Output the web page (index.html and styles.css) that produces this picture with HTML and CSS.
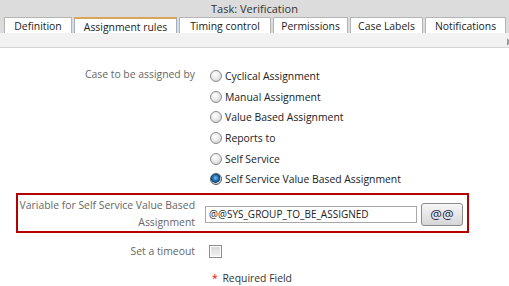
FILE: index.html
```html
<!DOCTYPE html>
<html>
  <head>
    <meta charset="UTF-8">
    <title>Task: Verification</title>
    <link rel="stylesheet" href="styles.css">
  </head>
  <body>
    <div class="titlebar">Task: Verification</div>
    <div class="tabs">
      <div class="tab">Definition</div>
      <div class="tab active">Assignment rules</div>
      <div class="tab">Timing control</div>
      <div class="tab">Permissions</div>
      <div class="tab">Case Labels</div>
      <div class="tab">Notifications</div>
    </div>
    <div class="strip"><span class="arrow"></span></div>

    <div class="form">
      <div class="row">
        <div class="label">Case to be assigned by</div>
        <div class="options">
          <label class="option"><input type="radio" name="assign"> Cyclical Assignment</label>
          <label class="option"><input type="radio" name="assign"> Manual Assignment</label>
          <label class="option"><input type="radio" name="assign"> Value Based Assignment</label>
          <label class="option"><input type="radio" name="assign"> Reports to</label>
          <label class="option"><input type="radio" name="assign"> Self Service</label>
          <label class="option"><input type="radio" name="assign" checked> Self Service Value Based Assignment</label>
        </div>
      </div>

      <div class="row highlight">
        <div class="label">Variable for Self Service Value Based Assignment</div>
        <div class="field">
          <input type="text" class="text" value="@@SYS_GROUP_TO_BE_ASSIGNED">
          <button class="vars">@@</button>
        </div>
      </div>

      <div class="row timeout">
        <div class="label">Set a timeout</div>
        <div><input type="checkbox" class="check"></div>
      </div>

      <div class="required"><span class="star">*</span> Required Field</div>
    </div>
  </body>
</html>
```

FILE: styles.css
```css
body {
  margin: 0;
  font-family: "Open Sans", Arial, sans-serif;
  font-size: 10.4px;
  color: #333;
  background: #fff;
}
.titlebar {
  background: #dcdcdc;
  height: 17px;
  line-height: 17px;
  text-align: center;
  font-size: 11px;
  color: #333;
}
.tabs {
  display: flex;
  gap: 2px;
  background: #dcdcdc;
  padding-left: 4px;
  height: 16px;
}
.tab {
  box-sizing: border-box;
  background: #fff;
  border: 1px solid #b4b4b4;
  border-bottom: none;
  line-height: 17px;
  text-align: center;
  white-space: nowrap;
  color: #222;
}
.tab:nth-child(1) { width: 68px; }
.tab:nth-child(2) { width: 103px; }
.tab:nth-child(3) { width: 92px; }
.tab:nth-child(4) { width: 75px; }
.tab:nth-child(5) { width: 73px; }
.tab:nth-child(6) { width: 81px; }
.tab.active {
  border-top: 2px solid #d9a55a;
  border-left-color: #9fb0c4;
  border-right-color: #9fb0c4;
  line-height: 16px;
}
.strip {
  display: flex;
  justify-content: flex-end;
  align-items: center;
  height: 14px;
  background: #f2f2f2;
  border-bottom: 1px solid #d4d4d4;
}
.arrow {
  width: 0;
  height: 0;
  border-top: 4px solid transparent;
  border-bottom: 4px solid transparent;
  border-left: 4px solid #999;
  margin-right: -2px;
  margin-top: 4px;
}
.form {
  padding-top: 18px;
}
.row {
  display: grid;
  grid-template-columns: 195px auto;
  column-gap: 10px;
}
.label {
  text-align: right;
  color: #666;
  line-height: 17px;
}
.options {
  display: flex;
  flex-direction: column;
}
.option {
  display: flex;
  align-items: center;
  height: 20.6px;
  color: #222;
}
.option input {
  appearance: none;
  width: 12px;
  height: 12px;
  margin: 0 3px 0 5px;
  border: 1px solid #8c8c8c;
  border-radius: 50%;
  background: radial-gradient(circle at 40% 35%, #fff 0%, #e6e6e6 55%, #bdbdbd 100%);
}
.option input:checked {
  background: radial-gradient(circle at 45% 40%, #7fc1f0 0%, #1c6fb5 35%, #0b3e6e 55%, #d8d8d8 62%, #a9a9a9 100%);
  border-color: #5a5a5a;
}
.highlight {
  border: 2px solid #b40000;
  margin: 3px 40px 0 16px;
  grid-template-columns: 177px auto;
  padding: 2px 0 0;
  align-items: center;
}
.field {
  display: flex;
  align-items: center;
  gap: 4px;
  padding-top: 1px;
}
.text {
  width: 212px;
  height: 17px;
  box-sizing: border-box;
  border: 1px solid #a8a8a8;
  font-family: "Open Sans", Arial, sans-serif;
  font-size: 10px;
  color: #222;
  padding: 0 3px;
  margin: 0;
}
.vars {
  width: 42px;
  height: 23px;
  border: 1px solid #8a8a8a;
  border-radius: 3px;
  background: linear-gradient(#f7f7f7, #d6d6d6);
  font-family: "Open Sans", Arial, sans-serif;
  font-size: 13px;
  color: #1b1f4a;
  padding: 0;
}
.timeout {
  margin-top: 10px;
  align-items: center;
}
.check {
  appearance: none;
  width: 13px;
  height: 13px;
  margin: 0 0 0 4px;
  border: 1px solid #8c8c8c;
  box-shadow: inset 0 0 0 1px #fff;
  background: linear-gradient(#d6d6d6, #f4f4f4);
  display: block;
}
.required {
  margin: 11px 0 0 212px;
  color: #333;
}
.star {
  color: #e00;
  margin-right: 2px;
}
```
